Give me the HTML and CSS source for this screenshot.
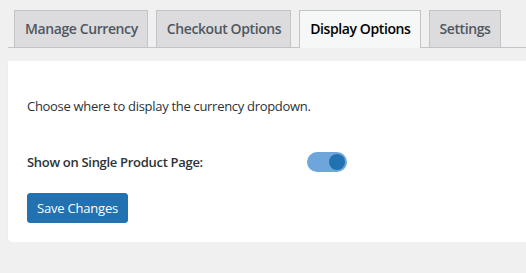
FILE: index.html
```
<!DOCTYPE html>
<html lang="en">
<head>
  <meta charset="UTF-8">
  <meta name="viewport" content="width=device-width, initial-scale=1.0">
  <title>Currency Settings</title>
  <link rel="stylesheet" href="styles.css">
</head>
<body>
  <div class="wrap">
    <nav class="nav-tabs">
      <a class="nav-tab" href="#">Manage Currency</a>
      <a class="nav-tab" href="#">Checkout Options</a>
      <a class="nav-tab active" href="#">Display Options</a>
      <a class="nav-tab" href="#">Settings</a>
    </nav>

    <div class="card">
      <p class="intro">Choose where to display the currency dropdown.</p>

      <div class="option-row">
        <span class="option-label">Show on Single Product Page:</span>
        <label class="switch">
          <input type="checkbox" checked>
          <span class="slider"></span>
        </label>
      </div>

      <button type="button" class="save-btn">Save Changes</button>
    </div>
  </div>
</body>
</html>
```

FILE: styles.css
```
body {
  font-family: "Open Sans", sans-serif;
  background-color: #f0f0f1;
  color: #1d2327;
  margin: 0;
}
.wrap {
  padding: 10px 0 0 8px;
}
.nav-tabs {
  display: flex;
  gap: 8px;
  padding-left: 6px;
  border-bottom: 1px solid #c3c4c7;
}
.nav-tab {
  display: block;
  flex-shrink: 0;
  white-space: nowrap;
  height: 36px;
  line-height: 36px;
  padding: 0 9px 0 10px;
  margin-bottom: -1px;
  background-color: #dcdcde;
  border: 1px solid #c3c4c7;
  border-bottom: none;
  color: #50575e;
  font-size: 14px;
  font-weight: 600;
  letter-spacing: -0.4px;
  text-decoration: none;
}
.nav-tab.active {
  background-color: #f6f7f7;
  color: #000;
  height: 37px;
}
.card {
  margin-top: 13px;
  background-color: #fff;
  border-radius: 0 0 0 4px;
  box-shadow: 0 1px 2px rgba(0, 0, 0, 0.06);
  padding: 26px 19px 19px;
}
.intro {
  margin: 10px 0 37px;
  font-size: 13px;
  letter-spacing: -0.3px;
  color: #2c3338;
}
.option-row {
  display: flex;
  align-items: center;
  height: 20px;
  margin-bottom: 21px;
}
.option-label {
  width: 280px;
  font-size: 13px;
  font-weight: 600;
  letter-spacing: -0.3px;
  color: #2c3338;
}
.switch {
  position: relative;
  display: inline-block;
  width: 40px;
  height: 20px;
}
.switch input {
  display: none;
}
.slider {
  position: absolute;
  inset: 0;
  background-color: #c3c4c7;
  border-radius: 10px;
}
.slider::before {
  content: "";
  position: absolute;
  top: 2px;
  left: 2px;
  width: 16px;
  height: 16px;
  border-radius: 50%;
  background-color: #fff;
}
.switch input:checked + .slider {
  background-color: #6ea6dc;
}
.switch input:checked + .slider::before {
  left: 22px;
  background-color: #2271b1;
}
.save-btn {
  display: block;
  width: 101px;
  height: 30px;
  padding: 0;
  background-color: #2271b1;
  border: 1px solid #2271b1;
  border-radius: 3px;
  color: #fff;
  font-family: inherit;
  font-size: 13px;
  letter-spacing: -0.2px;
  cursor: pointer;
}
```
